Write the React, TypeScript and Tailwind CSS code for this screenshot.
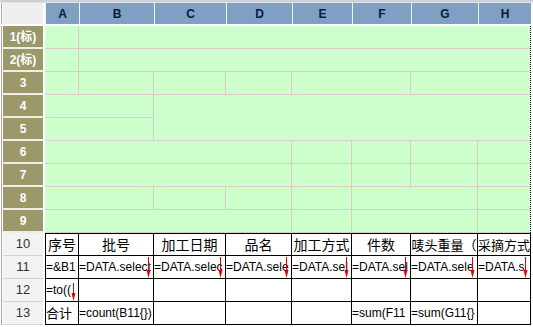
import React from "react";

const COL_LETTERS = ["A", "B", "C", "D", "E", "F", "G", "H"];

// green design area, rows 1-9 (merged cells)
const GREEN_CELLS: { cls: string; last?: boolean }[] = [
  { cls: "col-start-1 row-start-1" },
  { cls: "col-start-2 col-span-7 row-start-1", last: true },
  { cls: "col-start-1 row-start-2" },
  { cls: "col-start-2 col-span-7 row-start-2", last: true },
  { cls: "col-start-1 row-start-3" },
  { cls: "col-start-2 row-start-3" },
  { cls: "col-start-3 row-start-3" },
  { cls: "col-start-4 row-start-3" },
  { cls: "col-start-5 col-span-2 row-start-3" },
  { cls: "col-start-7 col-span-2 row-start-3", last: true },
  { cls: "col-start-1 col-span-2 row-start-4" },
  { cls: "col-start-3 col-span-6 row-start-4 row-span-2", last: true },
  { cls: "col-start-1 col-span-2 row-start-5" },
  { cls: "col-start-1 col-span-4 row-start-6" },
  { cls: "col-start-5 row-start-6" },
  { cls: "col-start-6 row-start-6" },
  { cls: "col-start-7 row-start-6" },
  { cls: "col-start-8 row-start-6", last: true },
  { cls: "col-start-1 col-span-4 row-start-7" },
  { cls: "col-start-5 row-start-7" },
  { cls: "col-start-6 row-start-7" },
  { cls: "col-start-7 row-start-7" },
  { cls: "col-start-8 row-start-7", last: true },
  { cls: "col-start-1 col-span-2 row-start-8" },
  { cls: "col-start-3 row-start-8" },
  { cls: "col-start-4 row-start-8" },
  { cls: "col-start-5 row-start-8" },
  { cls: "col-start-6 col-span-2 row-start-8" },
  { cls: "col-start-8 row-start-8", last: true },
  { cls: "col-start-1 col-span-4 row-start-9" },
  { cls: "col-start-5 row-start-9" },
  { cls: "col-start-6 col-span-2 row-start-9" },
  { cls: "col-start-8 row-start-9", last: true },
];

const TITLES: { t: string; small?: boolean }[] = [
  { t: "序号" },
  { t: "批号" },
  { t: "加工日期" },
  { t: "品名" },
  { t: "加工方式" },
  { t: "件数" },
  { t: "唛头重量（", small: true },
  { t: "采摘方式", small: true },
];
// formulas as far as they show before the cell edge
const ROW11 = ["=&B1", "=DATA.select", "=DATA.selec", "=DATA.sele", "=DATA.sel", "=DATA.sel", "=DATA.sele", "=DATA.s"];

const DownArrow = ({ short }: { short?: boolean }) => (
  <svg
    className={`absolute right-[2px] ${short ? "top-[4px]" : "top-[1px]"}`}
    width="5"
    height={short ? 18 : 21}
    viewBox={short ? "0 0 5 18" : "0 0 5 21"}
  >
    <line x1="2.5" y1="0" x2="2.5" y2={short ? 12 : 15} stroke="#e00000" strokeWidth="1" />
    <path d={short ? "M0.5 10 L4.5 10 L2.5 18 Z" : "M0.5 13 L4.5 13 L2.5 21 Z"} fill="#e00000" />
  </svg>
);

const TextCell = ({ text, arrow, short }: { text?: string; arrow?: boolean; short?: boolean }) => (
  <div className="relative border-r border-b border-black bg-white overflow-hidden whitespace-nowrap flex items-center text-[12px] text-black">
    {text && <span>{text}</span>}
    {arrow && <DownArrow short={short} />}
  </div>
);

export default function App() {
  return (
    <div className="w-[533px] h-[327px] bg-white overflow-hidden flex flex-col font-['Liberation_Sans','Noto_Sans_CJK_SC',sans-serif]">
      {/* top strip */}
      <div className="h-[3px] bg-[#cfcfcf] border-b border-[#e4e4e4]" />

      {/* column header row */}
      <div className="flex h-[21px]">
        <div className="w-[3px] border-x border-x-white bg-[#a9a9a9]" />
        <div className="w-[40px] bg-[#efefef]" />
        <div className="w-[2px]" />
        <div className="grid grid-cols-[34px_75px_72px_66px_60px_59px_67px_53px]">
          {COL_LETTERS.map((c) => (
            <div
              key={c}
              className="border-l border-[#eef3f8] bg-[#7f9fc3] flex items-center justify-center text-[12px] font-bold text-[#0c1a40]"
            >
              {c}
            </div>
          ))}
        </div>
      </div>

      <div className="h-[2px]" />

      {/* body */}
      <div className="flex">
        <div className="w-[3px] border-x border-x-white bg-[#a9a9a9]" />
        {/* row headers */}
        <div className="w-[40px] flex flex-col">
          {["1(标)", "2(标)", "3", "4", "5", "6", "7", "8", "9"].map((r) => (
            <div
              key={r}
              className="h-[23px] bg-[#9b9969] border-b-[2px] border-[#eeeee4] flex items-center justify-center text-[12px] font-bold text-white"
            >
              {r}
            </div>
          ))}
          {["10", "11", "12", "13"].map((r) => (
            <div
              key={r}
              className="h-[23px] bg-[#f3f3f3] border-b border-[#d4d4d4] flex items-center justify-center text-[13px] text-[#333333]"
            >
              {r}
            </div>
          ))}
        </div>
        <div className="w-[2px]" />

        <div className="flex flex-col">
          {/* green area */}
          <div className="grid grid-cols-[34px_75px_72px_66px_60px_59px_67px_52px] grid-rows-[repeat(9,23px)] border-r border-dotted border-r-black">
            {GREEN_CELLS.map((c, i) => (
              <div
                key={i}
                className={`${c.cls} bg-[#ccffcc] border-b border-[#dacaca] ${c.last ? "" : "border-r"}`}
              />
            ))}
          </div>

          {/* report table rows 10-13 */}
          <div className="grid grid-cols-[33px_75px_72px_66px_60px_59px_67px_53px] grid-rows-[22px_23px_23px_23px] border-t border-l border-black">
            {TITLES.map(({ t, small }) => (
              <div
                key={t}
                className={`border-r border-b border-black bg-white overflow-hidden whitespace-nowrap flex items-center justify-center text-black font-['Noto_Sans_CJK_SC',sans-serif] ${small ? "text-[13px]" : "text-[14px]"}`}
              >
                {t}
              </div>
            ))}
            {ROW11.map((t, i) => (
              <TextCell key={i} text={t} arrow={i > 0} />
            ))}
            <TextCell text="=to((" arrow short />
            {[1, 2, 3, 4, 5, 6, 7].map((i) => (
              <TextCell key={i} />
            ))}
            <div className="border-r border-b border-black bg-white overflow-hidden whitespace-nowrap flex items-center text-[13px] text-black font-['Noto_Sans_CJK_SC',sans-serif]">
              合计
            </div>
            <TextCell text="=count(B11{})" />
            <TextCell />
            <TextCell />
            <TextCell />
            <TextCell text="=sum(F11" />
            <TextCell text="=sum(G11{}" />
            <TextCell />
          </div>
        </div>
      </div>
    </div>
  );
}
